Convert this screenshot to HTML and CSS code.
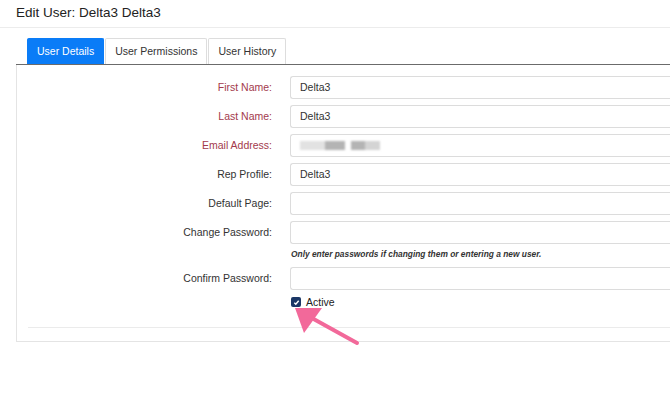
FILE: index.html
```html
<!DOCTYPE html>
<html lang="en">

<head>
    <meta charset="UTF-8">
    <meta name="viewport" content="width=device-width, initial-scale=1.0">
    <title>Edit User</title>
    <link rel="stylesheet" href="styles.css">
</head>

<body>
    <div class="page-header">
        <h1>Edit User: Delta3 Delta3</h1>
    </div>

    <div class="page-body">
        <ul class="tabs">
            <li class="tab active">User Details</li>
            <li class="tab">User Permissions</li>
            <li class="tab">User History</li>
        </ul>

        <div class="tab-panel">
            <form class="user-form">
                <label class="form-label required">First Name:</label>
                <div class="form-field"><div class="text-input">Delta3</div></div>

                <label class="form-label required">Last Name:</label>
                <div class="form-field"><div class="text-input">Delta3</div></div>

                <label class="form-label required">Email Address:</label>
                <div class="form-field">
                    <div class="text-input">
                        <span class="blurred">
                            <span class="blur-chunk light"></span><span class="blur-chunk"></span><span class="blur-gap"></span><span class="blur-chunk short"></span><span class="blur-chunk light tail"></span>
                        </span>
                    </div>
                </div>

                <label class="form-label">Rep Profile:</label>
                <div class="form-field"><div class="text-input">Delta3</div></div>

                <label class="form-label">Default Page:</label>
                <div class="form-field"><div class="text-input"></div></div>

                <label class="form-label">Change Password:</label>
                <div class="form-field">
                    <div class="text-input"></div>
                    <p class="help-text">Only enter passwords if changing them or entering a new user.</p>
                </div>

                <label class="form-label">Confirm Password:</label>
                <div class="form-field"><div class="text-input"></div></div>

                <div></div>
                <div class="form-field check-row">
                    <span class="checkbox">
                        <svg width="7" height="7" viewBox="0 0 8 8"><path d="M1.5 4.3 L3.2 6 L6.5 2" fill="none" stroke="#fff" stroke-width="1.6"/></svg>
                    </span>
                    <span class="check-label">Active</span>
                </div>
            </form>

            <div class="form-footer"></div>
        </div>
    </div>

    <!-- annotation arrow -->
    <svg class="pointer-arrow" width="80" height="50" viewBox="0 0 80 50">
        <line x1="65" y1="40" x2="18" y2="14" stroke="#f2699a" stroke-width="4" stroke-linecap="round"/>
        <polygon points="3,5 30,5 12,30" fill="#f2699a"/>
    </svg>
</body>

</html>
```

FILE: styles.css
```css
/* Reset */
* {
    margin: 0;
    padding: 0;
    box-sizing: border-box;
}

body {
    font-family: 'Liberation Sans', Arial, sans-serif;
    color: #222;
    background: #fff;
    height: 397px;
    overflow: hidden;
    position: relative;
}

/* Header */
.page-header {
    height: 28px;
    padding: 5px 0 0 16px;
    border-bottom: 1px solid #ececec;
}

.page-header h1 {
    font-size: 13.5px;
    font-weight: normal;
    color: #222;
}

.page-body {
    padding: 10px 0 0 16px;
}

/* Tabs */
.tabs {
    list-style: none;
    display: flex;
    padding-left: 11px;
    border-bottom: 1px solid #6b6b6b;
}

.tab {
    height: 26px;
    padding: 0 9px;
    margin-right: 1px;
    font-size: 10.5px;
    line-height: 25px;
    color: #333;
    border: 1px solid #ddd;
    border-bottom: none;
    border-radius: 2px 2px 0 0;
    background: #fff;
}

.tab.active {
    background: #0a7cf7;
    border-color: #0a7cf7;
    color: #fff;
}

/* Panel */
.tab-panel {
    border: 1px solid #e4e4e4;
    border-top: none;
    border-right: none;
    height: 277px;
    padding: 11px 0 0 11px;
}

.user-form {
    display: grid;
    grid-template-columns: 244px 1fr;
    column-gap: 18px;
    row-gap: 6px;
    align-items: start;
}

.form-label {
    font-size: 10.5px;
    color: #333;
    text-align: right;
    height: 23px;
    line-height: 23px;
}

.form-label.required {
    color: #a33a4c;
}

.text-input {
    height: 23px;
    border: 1px solid #dcdcdc;
    border-right: none;
    border-radius: 3px 0 0 3px;
    padding: 0 9px;
    font-size: 10.5px;
    line-height: 21px;
    color: #333;
    background: #fff;
}

.help-text {
    font-size: 8.4px;
    font-weight: bold;
    font-style: italic;
    color: #333;
    margin: 5px 0 2px 1px;
    white-space: nowrap;
}

/* Blurred email */
.blurred {
    display: inline-flex;
    align-items: center;
    height: 21px;
    filter: blur(0.8px);
}

.blur-chunk {
    display: inline-block;
    width: 20px;
    height: 9px;
    background: #b4b4b4;
}

.blur-chunk.light {
    width: 25px;
    background: #e2e2e2;
}

.blur-chunk.short {
    width: 14px;
}

.blur-chunk.tail {
    width: 15px;
    background: #d4d4d4;
}

.blur-gap {
    display: inline-block;
    width: 6px;
}

/* Checkbox */
.check-row {
    display: flex;
    align-items: center;
    gap: 5px;
    height: 18px;
    margin-top: -3px;
    padding-left: 1px;
}

.checkbox {
    width: 10px;
    height: 10px;
    border-radius: 2px;
    background: #1b3766;
    display: flex;
    align-items: center;
    justify-content: center;
}

.check-label {
    font-size: 10.5px;
    color: #222;
}

.form-footer {
    margin-top: 16px;
    border-top: 1px solid #ebebeb;
}

/* Annotation */
.pointer-arrow {
    position: absolute;
    left: 292px;
    top: 303px;
}
```
